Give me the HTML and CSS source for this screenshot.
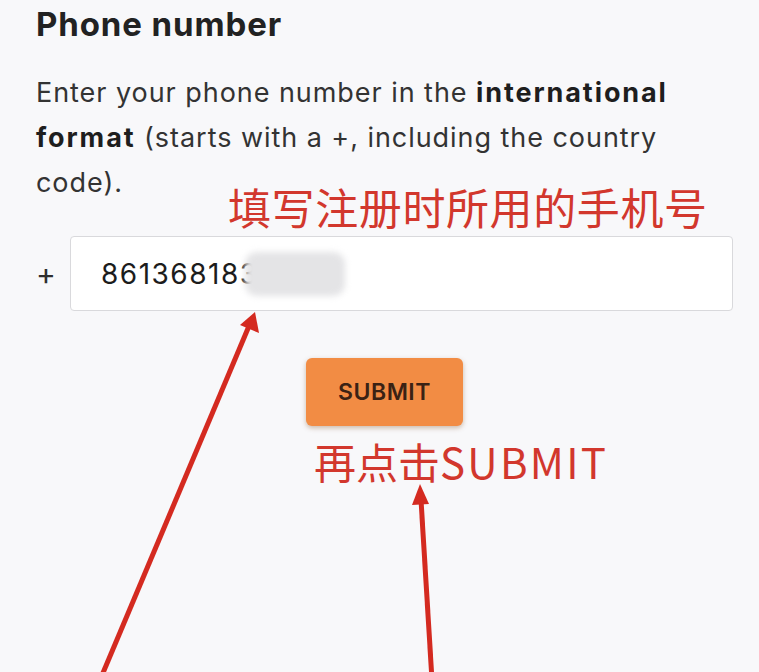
FILE: index.html
```html
<!DOCTYPE html>
<html>
<head>
<meta charset="utf-8">
<link rel="stylesheet" href="styles.css">
</head>
<body>
<main class="page">
  <h1 class="title">Phone number</h1>
  <p class="desc">Enter your phone number in the <b>international format</b> (starts with a +, including the country code).</p>
  <div class="row">
    <span class="plus">+</span>
    <div class="field"><span class="value">861368183<span class="blur"></span></span></div>
  </div>
  <div class="actions">
    <button class="submit">SUBMIT</button>
  </div>
</main>
<div class="note note-1">填写注册时所用的手机号</div>
<div class="note note-2">再点击<span class="latin">SUBMIT</span></div>
<svg class="arrows" width="759" height="672" viewBox="0 0 759 672">
  <line x1="100" y1="680" x2="249" y2="326" stroke="#d42a20" stroke-width="5"/>
  <polygon points="255,312 259,333 240,325" fill="#d42a20"/>
  <line x1="432" y1="680" x2="421" y2="500" stroke="#d42a20" stroke-width="5"/>
  <polygon points="420,484 429,504 412,505" fill="#d42a20"/>
</svg>
</body>
</html>
```
FILE: styles.css
```css
html, body {
  margin: 0;
  padding: 0;
  background: #f8f8fa;
}
body {
  width: 759px;
  height: 672px;
  overflow: hidden;
  position: relative;
  font-family: Inter, "Liberation Sans", Arial, sans-serif;
  color: #2b2b2b;
}
.page {
  padding: 0 26px 0 36px;
}
.title {
  margin: 0;
  padding-top: 2px;
  font-size: 33px;
  line-height: 44px;
  font-weight: 700;
  letter-spacing: 0.9px;
  color: #222;
}
.desc {
  max-width: 680px;
  margin: 24px 0 0;
  font-size: 27px;
  line-height: 45px;
  letter-spacing: 0.95px;
  color: #333;
}
.desc b {
  font-weight: 700;
  letter-spacing: 1.9px;
  color: #1e1e1e;
}
.row {
  display: flex;
  align-items: center;
  margin-top: 31px;
}
.plus {
  width: 34px;
  font-size: 30px;
  line-height: 1;
  color: #2e2e2e;
}
.field {
  flex: 1;
  height: 75px;
  background: #fff;
  border: 1px solid #d9d9dc;
  border-radius: 4px;
  display: flex;
  align-items: center;
  padding-left: 30px;
  box-sizing: border-box;
}
.value {
  font-size: 28px;
  letter-spacing: 1.5px;
  color: #1c1c1c;
  display: flex;
  align-items: center;
}
.blur {
  display: inline-block;
  width: 100px;
  height: 44px;
  margin-left: -14px;
  background: #e4e4e6;
  border-radius: 12px;
  filter: blur(3px);
}
.actions {
  display: flex;
  justify-content: center;
  margin-top: 47px;
}
.submit {
  width: 157px;
  height: 68px;
  border: none;
  border-radius: 6px;
  background: #f28c44;
  box-shadow: 0 2px 5px rgba(120, 70, 20, 0.35);
  font-family: Inter, "Liberation Sans", Arial, sans-serif;
  font-size: 23px;
  font-weight: 600;
  letter-spacing: 0.5px;
  color: #3a2214;
}
.note {
  position: absolute;
  color: #d2372d;
  font-family: "Noto Sans CJK SC", sans-serif;
  white-space: nowrap;
  line-height: 1;
}
.note-1 {
  left: 228px;
  top: 185px;
  font-size: 43px;
  letter-spacing: 0.6px;
}
.note-2 {
  left: 314px;
  top: 440px;
  font-size: 42px;
}
.note-2 .latin {
  letter-spacing: 2.3px;
}
.arrows {
  position: absolute;
  left: 0;
  top: 0;
}
```
